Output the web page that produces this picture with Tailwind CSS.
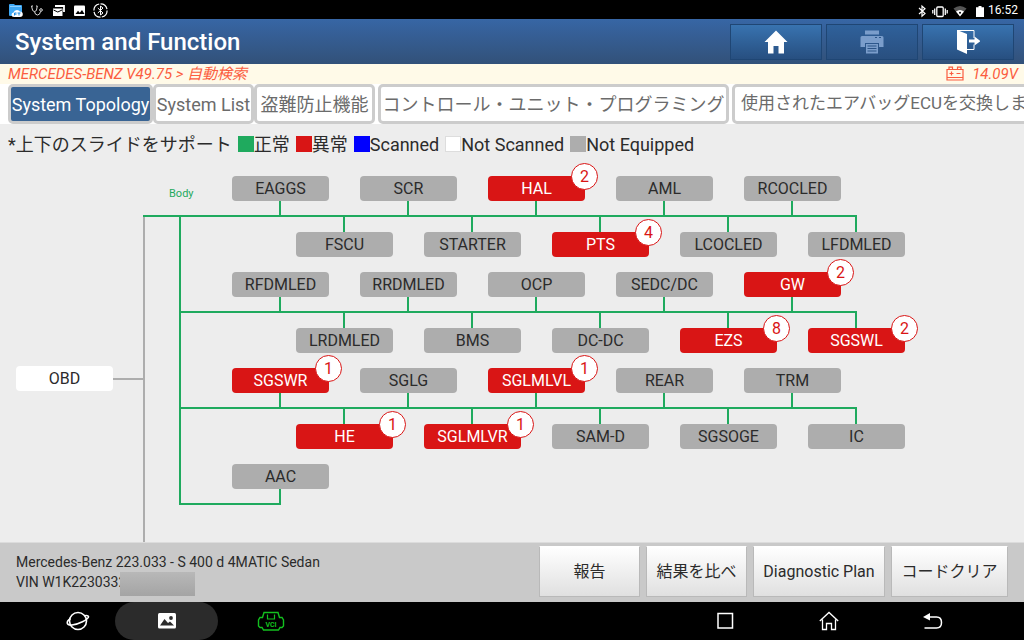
<!DOCTYPE html>
<html lang="ja">
<head>
<meta charset="utf-8">
<meta name="viewport" content="width=device-width, initial-scale=1">
<title>System and Function</title>
<script src="https://cdn.jsdelivr.net/npm/@tailwindcss/browser@4"></script>
</head>
<body class="flex h-screen flex-col overflow-hidden bg-[#ededed] font-['Roboto','Noto_Sans_CJK_JP',sans-serif] text-[#2b2b2b]">

<!-- Status bar -->
<div class="flex h-[19px] shrink-0 items-center justify-between bg-black pr-1.5 pl-2 text-white">
  <div class="flex items-center gap-[5px]">
    <svg class="h-4 w-4" viewBox="0 0 16 16"><path d="M1 3q0-1 1-1h4l1 1h6q1 0 1 1v9q0 1-1 1H2q-1 0-1-1z" fill="#3fa9f5"/><path d="M2 4.500h11" stroke="#8fd0ff"/><path d="M6 15q-2.500 0-2.500-2.200 0-2 2-2.300.6-2.500 3.500-2.500 2 0 2.800 1.500 3 0 3 2.800 0 2.700-2.800 2.700z" fill="#fff"/><path d="M6.500 13.500V11h2M6.500 12.200h2M9.500 11h3M11 11v2.500" stroke="#1d8be0" fill="none"/></svg>
    <svg class="h-4 w-4" viewBox="0 0 16 16" fill="none" stroke="#ddd" stroke-width="1"><path d="M4 4H2.500l1 4q.8 1.600 2 1.600T7.500 8l.8-4H7"/><path d="M5.500 9.600Q6 13 8.500 13t3-3.500"/><circle cx="12" cy="8" r="1.300"/></svg>
    <svg class="h-4 w-4" viewBox="0 0 16 16"><path d="M5 4h9v6" fill="none" stroke="#fff" stroke-width="1.800"/><path d="M3 6.500h9.500V14H3z" fill="#fff"/><path d="M3.500 8l4.300 2L12 8" stroke="#000" fill="none"/></svg>
    <svg class="h-4 w-4" viewBox="0 0 16 16"><rect x="3" y="3.500" width="11" height="10.500" rx="1" fill="#fff"/><path d="M4.500 12l2.500-3.300 1.800 2L11 8l2.500 4z" fill="#000"/></svg>
    <svg class="h-4 w-4" viewBox="0 0 16 16" fill="none" stroke="#fff"><circle cx="8.500" cy="8.500" r="6.600" stroke-width="1.200" stroke-dasharray="9 1.300"/><path d="M5.800 6l5.200 5-2.500 2V4L11 6l-5.200 5"/></svg>
  </div>
  <div class="flex items-center gap-1">
    <svg class="h-4 w-3" viewBox="0 0 12 16" fill="none" stroke="#fff" stroke-width="1.200"><path d="M3 6l6 5.500-3 2.700V4l3 2.700L3 12"/></svg>
    <svg class="h-4 w-4" viewBox="0 0 16 16" fill="none" stroke="#fff" stroke-width="1.300"><rect x="4.800" y="5" width="6.400" height="9.500" rx="1"/><path d="M2.700 6.500V13M.8 8v3.500M13.300 6.500V13M15.200 8v3.500"/></svg>
    <svg class="h-4 w-4" viewBox="0 0 16 16"><path d="M1.500 6.500q6.500-5 13 0L8 14.500z" fill="#555"/><path d="M4 9.500q4-3 8 0l-4 5z" fill="#fff"/><circle cx="8" cy="10.800" r="1" fill="#000"/></svg>
    <svg class="ml-1 h-4 w-2" viewBox="0 0 8 16"><path d="M2.500 4h3v1.300H8V15H0V5.300h2.500z" fill="#fff"/></svg>
    <span class="text-xs">16:52</span>
  </div>
</div>

<!-- Title bar -->
<header class="flex h-[45px] shrink-0 items-center justify-between bg-linear-to-b from-[#3766a5] to-[#325179] pr-2.5 pl-[15px]">
  <h1 class="text-[24px] font-medium text-white">System and Function</h1>
  <div class="flex gap-1">
    <button aria-label="Home" class="flex h-9 w-[92px] items-center justify-center border border-[#1f4674] bg-linear-to-b from-[#3873b0] to-[#274f80]">
      <svg class="h-6 w-6" viewBox="0 0 24 24" fill="#fff"><path d="M12 0.500L23.500 12H20v11.500h-5.500V16h-5v7.500H4V12H.5z"/></svg>
    </button>
    <button aria-label="Print" class="flex h-9 w-[92px] items-center justify-center border border-[#1f4674] bg-linear-to-b from-[#2f619b] to-[#294f7f]">
      <svg class="h-6 w-6" viewBox="0 0 24 24" fill="#7a9dcb"><path d="M5 0.500h14v4H5z"/><path d="M2 6h20q1.500 0 1.500 1.500V17H19v-4H5v4H.5V7.500Q.5 6 2 6z"/><path d="M6 14h12v9.500H6z"/><path d="M7.500 16h9M7.500 18.500h9M7.500 21h9" stroke="#2b5487" stroke-width="1"/><path d="M15 7.500h2M19 7.500h2" stroke="#2b5487"/></svg>
    </button>
    <button aria-label="Exit" class="flex h-9 w-[92px] items-center justify-center border border-[#1f4674] bg-linear-to-b from-[#3873b0] to-[#274f80]">
      <svg class="h-6 w-6" viewBox="0 0 24 24"><path d="M1 .5h17V8M18 14.500v5h-7" fill="none" stroke="#fff" stroke-width="1"/><path d="M1 0l10 4v20L1 19.500z" fill="#fff"/><path d="M13 9.500h5.500V6.500l6 4.500-6 4.500v-3H13z" fill="#fff"/></svg>
    </button>
  </div>
</header>

<!-- Vehicle path and battery voltage -->
<div class="flex h-5 shrink-0 items-center justify-between bg-[#fffae8] pr-1.5 pl-2 text-[15px] leading-5 text-[#fb5d40] italic">
  <span>MERCEDES-BENZ V49.75 &gt; 自動検索</span>
  <span class="flex items-center gap-2">
    <svg class="h-4 w-[18px]" viewBox="0 0 18 16" fill="none" stroke="#fb5d40" stroke-width="1.200"><path d="M1 3.500h16V14H1zM1 11.500h16M3 3V1.200h3.500V3M11.500 3V1.200H15V3M3.500 7.500h4M5.500 5.500v4M10.500 7.500h4"/></svg>
    <span>14.09V</span>
  </span>
</div>

<!-- Tabs -->
<nav class="flex h-10 shrink-0 overflow-hidden bg-white pl-2 text-[18px] whitespace-nowrap text-[#6b6b6b]">
  <button class="w-[145px] shrink-0 rounded-[5px] border-3 border-[#cccccc] bg-[#396494] text-white">System Topology</button>
  <button class="w-[101px] shrink-0 rounded-[5px] border-3 border-[#cccccc] bg-white">System List</button>
  <button class="mr-[3px] w-[121px] shrink-0 rounded-[5px] border-3 border-[#cccccc] bg-white">盗難防止機能</button>
  <button class="mr-[3px] w-[351px] shrink-0 rounded-[5px] border-3 border-[#cccccc] bg-white">コントロール・ユニット・プログラミング</button>
  <button class="shrink-0 rounded-[5px] border-3 border-[#cccccc] bg-white px-1.5 text-[17px]">使用されたエアバッグECUを交換します</button>
</nav>

<main class="flex min-h-0 flex-1 flex-col overflow-hidden">
  <!-- Legend -->
  <div class="flex h-10 shrink-0 items-center gap-1.5 pl-2 text-[18px] whitespace-nowrap">
    <span>*上下のスライドをサポート</span>
    <span class="flex items-center"><i class="h-4 w-4 bg-[#1faa5e]"></i>正常</span>
    <span class="flex items-center"><i class="h-4 w-4 bg-[#d91515]"></i>異常</span>
    <span class="flex items-center"><i class="h-4 w-4 bg-[#0000ff]"></i>Scanned</span>
    <span class="flex items-center"><i class="h-4 w-4 border border-[#dddddd] bg-white"></i>Not Scanned</span>
    <span class="flex items-center"><i class="h-4 w-4 bg-[#adadad]"></i>Not Equipped</span>
  </div>
  <!-- Topology canvas -->
  <div id="topology" class="relative min-h-0 flex-1 text-base">
    <svg class="absolute top-0 left-0 h-full w-full" fill="none" stroke-width="2">
      <path stroke="#adadad" d="M144 52V900M112 215H144"/>
      <path id="bus" stroke="#1faa5e"/>
    </svg>
    <span class="absolute top-[22px] left-[169px] text-[11px] leading-4 text-[#1faa5e]">Body</span>
    <button class="absolute top-[202px] left-4 h-[25px] w-[97px] rounded-sm bg-white">OBD</button>
  </div>
</main>

<!-- Vehicle summary and actions -->
<footer class="flex h-[60px] shrink-0 items-center justify-between border-t border-[#dcdcdc] bg-[#c9c9c9] px-4 pb-0.5">
  <div class="text-sm leading-5">
    <p>Mercedes-Benz 223.033 - S 400 d 4MATIC Sedan</p>
    <p class="flex">VIN W1K2230332<span class="relative -mb-1 -ml-1.5 h-6 w-[75px] bg-linear-to-t from-[#a4a4a4] to-[#b8b8b8]"></span></p>
  </div>
  <div class="flex gap-1.5 text-base">
    <button class="h-[51px] w-[101px] border border-[#b9b9b9] border-t-white bg-linear-to-b from-white to-[#e0e0e0]">報告</button>
    <button class="h-[51px] w-[101px] border border-[#b9b9b9] border-t-white bg-linear-to-b from-white to-[#e0e0e0]">結果を比べ</button>
    <button class="h-[51px] w-[132px] border border-[#b9b9b9] border-t-white bg-linear-to-b from-white to-[#e0e0e0]">Diagnostic Plan</button>
    <button class="h-[51px] w-[117px] border border-[#b9b9b9] border-t-white bg-linear-to-b from-white to-[#e0e0e0]">コードクリア</button>
  </div>
</footer>

<!-- Navigation bar -->
<nav class="flex h-[38px] shrink-0 items-center justify-between bg-black pr-[79px] pl-16">
  <div class="flex h-full items-center">
    <button aria-label="Browser" class="w-[51px]"><svg class="h-6 w-7" viewBox="0 0 28 24" fill="none" stroke="#fff" stroke-width="1.600"><circle cx="14" cy="12" r="8.500"/><path d="M6.500 9.500C1.500 13 2.500 16.500 8 16s17-5.500 16.500-8.500c-.4-1.300-2-1.200-3.800-.8"/></svg></button>
    <button aria-label="Gallery" class="flex h-[38px] w-[103px] items-center justify-center rounded-full bg-[#2b2b2b]"><svg class="h-4 w-[18px]" viewBox="0 0 18 16"><rect width="18" height="15.500" rx="1.500" fill="#fff"/><path d="M2 12.500L6.500 6l3.500 4 2-1.500 4 4z" fill="#2b2b2b"/><circle cx="13" cy="5" r="1.900" fill="#2b2b2b"/></svg></button>
    <button aria-label="VCI" class="ml-[39px]"><svg class="h-5 w-7" viewBox="0 0 28 20" fill="none" stroke="#13c01f" stroke-width="1.400"><path d="M7 1.500h14l1.500 5H25L26.500 9v6L25 16.500h-2L21.500 19h-15L5 16.500H3L1.500 15V9L3 6.500h2.500z"/><path d="M10.500 3.500V8h7V3.500" stroke-width="1.200"/><text x="14" y="15.500" text-anchor="middle" font-size="7" font-weight="700" fill="#13c01f" stroke="none">VCI</text></svg></button>
  </div>
  <div class="flex items-center gap-20">
    <button aria-label="Recent apps"><svg class="h-6 w-6" viewBox="0 0 24 24" fill="none" stroke="#fff" stroke-width="1.500"><rect x="5" y="4.500" width="14.500" height="14.500"/></svg></button>
    <button aria-label="Home screen"><svg class="h-6 w-6" viewBox="0 0 24 24" fill="none" stroke="#fff" stroke-width="1.300"><path d="M2.800 12L12 3.500l9.200 8.500M5.500 10.500v10h4v-6h5v6h4v-10"/></svg></button>
    <button aria-label="Back"><svg class="h-6 w-6" viewBox="0 0 24 24" fill="none" stroke="#fff" stroke-width="1.500"><path d="M6 8h9.500q5 0 5 5.500t-5 5.500H3.500"/><path d="M9 4v7.500L2 8z" fill="#fff" stroke="none"/></svg></button>
  </div>
</nav>

<script>
// Control units, listed row by row; the number is the count of fault codes.
const rows = [
  [['EAGGS'], ['SCR'], ['HAL', 2], ['AML'], ['RCOCLED']],
  [['FSCU'], ['STARTER'], ['PTS', 4], ['LCOCLED'], ['LFDMLED']],
  [['RFDMLED'], ['RRDMLED'], ['OCP'], ['SEDC/DC'], ['GW', 2]],
  [['LRDMLED'], ['BMS'], ['DC-DC'], ['EZS', 8], ['SGSWL', 2]],
  [['SGSWR', 1], ['SGLG'], ['SGLMLVL', 1], ['REAR'], ['TRM']],
  [['HE', 1], ['SGLMLVR', 1], ['SAM-D'], ['SGSOGE'], ['IC']],
  [['AAC']]
];
const canvas = document.getElementById('topology');
let path = 'M180 52V341M143 52H857M180 148H857M180 244H857M180 340H281';
rows.forEach((row, r) => {
  const lower = r % 2;
  const bus = 52 + Math.floor(r / 2) * 96;
  const y = bus + (lower ? 16 : -40);
  row.forEach(([name, faults], c) => {
    const x = 232 + c * 128 + lower * 64;
    path += lower ? `M${x + 48} ${bus}v16` : `M${x + 48} ${bus}v-15`;
    const node = document.createElement('button');
    node.className = faults
      ? 'absolute h-[25px] w-[97px] rounded-sm bg-[#d91515] text-white'
      : 'absolute h-[25px] w-[97px] rounded-sm bg-[#adadad]';
    node.style.left = x + 'px';
    node.style.top = y + 'px';
    node.textContent = name;
    if (faults) {
      const badge = document.createElement('span');
      badge.className = 'absolute -top-[13px] -right-[13px] flex h-[27px] w-[27px] items-center justify-center rounded-full border border-[#d91515] bg-white text-[#d91515]';
      badge.textContent = faults;
      node.append(badge);
    }
    canvas.append(node);
  });
});
document.getElementById('bus').setAttribute('d', path);
</script>
</body>
</html>
